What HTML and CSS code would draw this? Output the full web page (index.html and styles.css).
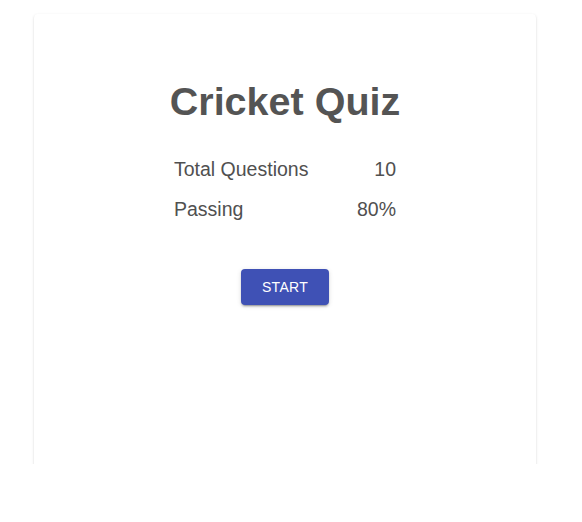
FILE: index.html
```html
<!DOCTYPE html>
<html>
<head>
<meta charset="utf-8">
<link rel="stylesheet" href="styles.css">
</head>
<body>
<div class="viewport">
  <div class="card">
    <h1 class="title">Cricket Quiz</h1>
    <table class="info">
      <tr><td>Total Questions</td><td class="val">10</td></tr>
      <tr><td>Passing</td><td class="val">80%</td></tr>
    </table>
    <button class="start">START</button>
  </div>
</div>
</body>
</html>
```
FILE: styles.css
```css
html, body {
  margin: 0;
  padding: 0;
  background: #fff;
  font-family: "Liberation Sans", Arial, sans-serif;
}
.viewport {
  height: 464px;
  overflow: hidden;
  padding: 14px 0 0 34px;
  box-sizing: border-box;
}
.card {
  width: 502px;
  height: 520px;
  box-sizing: border-box;
  background: #fff;
  border-radius: 4px;
  box-shadow: 0 2px 1px -1px rgba(0,0,0,0.2), 0 1px 1px 0 rgba(0,0,0,0.14), 0 1px 3px 0 rgba(0,0,0,0.12);
  display: flex;
  flex-direction: column;
  align-items: center;
  padding-top: 64px;
}
.title {
  margin: 0;
  font-size: 39.5px;
  font-weight: bold;
  color: #545454;
  line-height: 46px;
}
.info {
  margin-top: 25px;
  border-collapse: collapse;
  width: 222px;
  color: #505050;
  font-size: 19.5px;
}
.info td {
  padding: 0;
  height: 40px;
}
.info .val {
  text-align: right;
}
.start {
  margin-top: 40px;
  height: 36px;
  min-width: 88px;
  padding: 0 16px;
  border: none;
  border-radius: 4px;
  background: #3f51b5;
  color: #fff;
  font-family: "Liberation Sans", Arial, sans-serif;
  font-size: 14px;
  letter-spacing: 0.3px;
  box-shadow: 0 3px 1px -2px rgba(0,0,0,0.2), 0 2px 2px 0 rgba(0,0,0,0.14), 0 1px 5px 0 rgba(0,0,0,0.12);
}
```
